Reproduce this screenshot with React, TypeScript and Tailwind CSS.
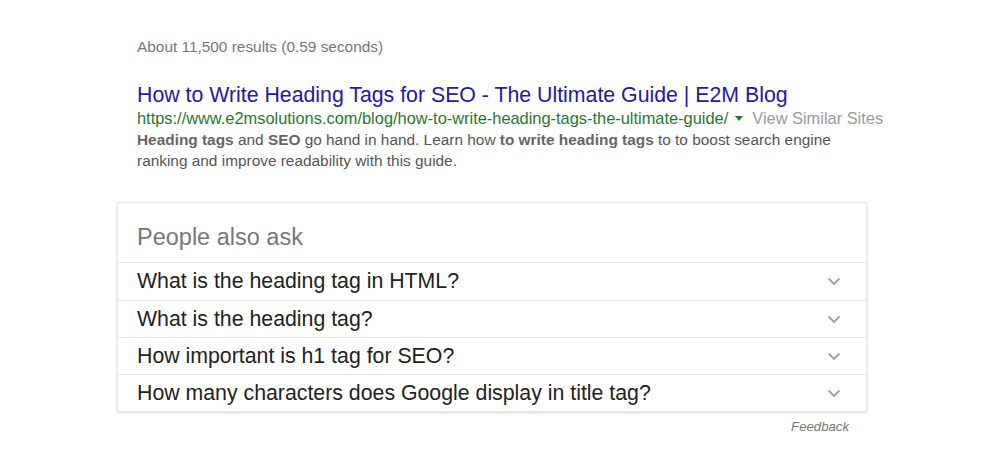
import React from "react";

const Chevron = () => (
  <svg width="14" height="9" viewBox="0 0 14 9" fill="none">
    <path d="M1.5 1.5 L7 7 L12.5 1.5" stroke="#9e9e9e" strokeWidth="1.8" />
  </svg>
);

const questions = [
  "What is the heading tag in HTML?",
  "What is the heading tag?",
  "How important is h1 tag for SEO?",
  "How many characters does Google display in title tag?",
];

export default function App() {
  return (
    <div
      className="w-[1006px] h-[469px] bg-white overflow-hidden"
      style={{ fontFamily: '"Liberation Sans", Arial, sans-serif' }}
    >
      <div className="pl-[137px] pt-[37px]">
        <div className="text-[15.4px] leading-[19px] text-[#777777]">
          About 11,500 results (0.59 seconds)
        </div>
        <div className="mt-[27px] text-[21.3px] leading-[25px] text-[#2518a3]">
          How to Write Heading Tags for SEO - The Ultimate Guide | E2M Blog
        </div>
        <div className="flex items-center text-[16.4px] leading-[21px]">
          <span className="text-[#1f7a2f]">
            https://www.e2msolutions.com/blog/how-to-write-heading-tags-the-ultimate-guide/
          </span>
          <span className="ml-[7px] mr-[9px] w-0 h-0 border-l-[4px] border-r-[4px] border-t-[5px] border-l-transparent border-r-transparent border-t-[#1f7a2f]" />
          <span className="text-[#9a9a9a]">View Similar Sites</span>
        </div>
        <div className="w-[730px] text-[15.4px] leading-[21px] text-[#555555]">
          <b className="text-[#666666]">Heading tags</b> and <b className="text-[#666666]">SEO</b> go hand in hand. Learn how <b className="text-[#666666]">to write heading tags</b> to to boost search engine ranking and improve readability with this guide.
        </div>
      </div>
      <div className="ml-[117px] mt-[31px] w-[750px]">
        <div className="border border-[#e6e6e6] rounded-[2px] shadow-[0_1px_3px_rgba(0,0,0,0.18)] bg-white">
          <div className="h-[59px] pl-[19px] pt-[20px] text-[23.5px] leading-[28px] text-[#777777]">
            People also ask
          </div>
          {questions.map((q, i) => (
            <div
              key={q}
              className={`${i === 0 ? "h-[38px]" : "h-[37px]"} border-t border-[#e6e6e6] flex items-center justify-between pl-[19px] pr-[25px]`}
            >
              <span className="text-[21.3px] leading-[25px] text-[#222222]">{q}</span>
              <Chevron />
            </div>
          ))}
        </div>
        <div className="flex justify-end pr-[18px] mt-[5px] text-[13.2px] italic text-[#777777]">
          Feedback
        </div>
      </div>
    </div>
  );
}
